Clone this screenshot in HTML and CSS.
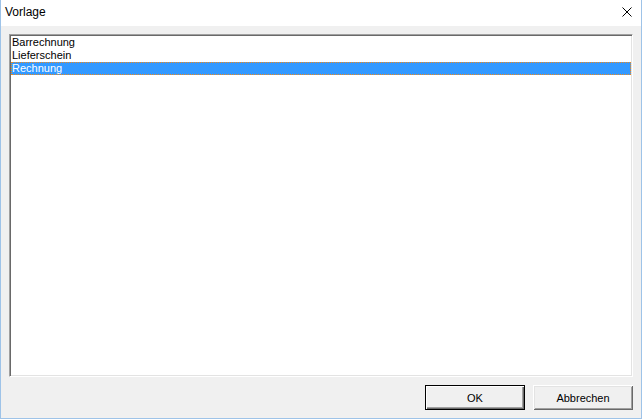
FILE: index.html
```html
<!DOCTYPE html>
<html lang="de">
<head>
<meta charset="utf-8">
<title>Vorlage</title>
<link rel="stylesheet" href="styles.css">
</head>
<body>
<div class="window">
  <div class="titlebar">
    <span class="title">Vorlage</span>
    <span class="close" aria-label="Schließen">
      <svg width="10" height="10" viewBox="0 0 10 10"><path d="M0.5 0.5 L9.5 9.5 M9.5 0.5 L0.5 9.5" stroke="#000" stroke-width="1" fill="none"/></svg>
    </span>
  </div>
  <div class="content">
    <div class="listbox">
      <div class="item">Barrechnung</div>
      <div class="item">Lieferschein</div>
      <div class="item selected">Rechnung</div>
    </div>
    <div class="buttons">
      <button class="btn default">OK</button>
      <button class="btn">Abbrechen</button>
    </div>
  </div>
</div>
</body>
</html>
```
FILE: styles.css
```css
html, body {
  margin: 0;
  padding: 0;
  background: #f0f0f0;
}
.window {
  width: 642px;
  height: 419px;
  box-sizing: border-box;
  border-left: 1px solid #9ec3e8;
  border-right: 1px solid #9ec3e8;
  border-bottom: 1px solid #9ec3e8;
  display: flex;
  flex-direction: column;
  background: #f0f0f0;
  font-family: "Liberation Sans", Arial, sans-serif;
}
.titlebar {
  height: 26px;
  background: #fff;
  display: flex;
  align-items: center;
  justify-content: space-between;
  padding: 0 9px 0 4px;
  flex: none;
}
.title {
  font-size: 12px;
  color: #000;
  line-height: 26px;
  margin-top: -2px;
}
.close {
  display: flex;
  width: 10px;
  height: 10px;
  margin-top: -3px;
}
.content {
  flex: 1;
  display: flex;
  flex-direction: column;
  padding: 8px 8px 8px 8px;
  gap: 8px;
}
.listbox {
  height: 343px;
  box-sizing: border-box;
  background: #fff;
  border-top: 1px solid #a0a0a0;
  border-left: 1px solid #a0a0a0;
  border-right: 1px solid #fff;
  border-bottom: 1px solid #fff;
  box-shadow: inset 1px 1px 0 #696969, inset -1px -1px 0 #e3e3e3;
  padding: 1px;
  display: flex;
  flex-direction: column;
}
.item {
  height: 13px;
  line-height: 13px;
  font-size: 11px;
  color: #000;
  padding-left: 1px;
  box-sizing: border-box;
  white-space: nowrap;
}
.item.selected {
  background: #3399ff;
  color: #fff;
  outline: 1px dotted #f0891a;
  outline-offset: -1px;
}
.buttons {
  display: flex;
  justify-content: flex-end;
  gap: 8px;
  height: 25px;
}
.btn {
  width: 100px;
  height: 25px;
  margin: 0;
  padding: 0;
  font-family: "Liberation Sans", Arial, sans-serif;
  font-size: 11px;
  color: #000;
  background: #f0f0f0;
  border: none;
  box-shadow: inset 1px 1px 0 #fff, inset -1px -1px 0 #696969, inset 2px 2px 0 #e3e3e3, inset -2px -2px 0 #a0a0a0;
}
.btn.default {
  border: 1px solid #000;
  box-shadow: inset 1px 1px 0 #fff, inset -1px -1px 0 #696969, inset -2px -2px 0 #a0a0a0;
}
```
